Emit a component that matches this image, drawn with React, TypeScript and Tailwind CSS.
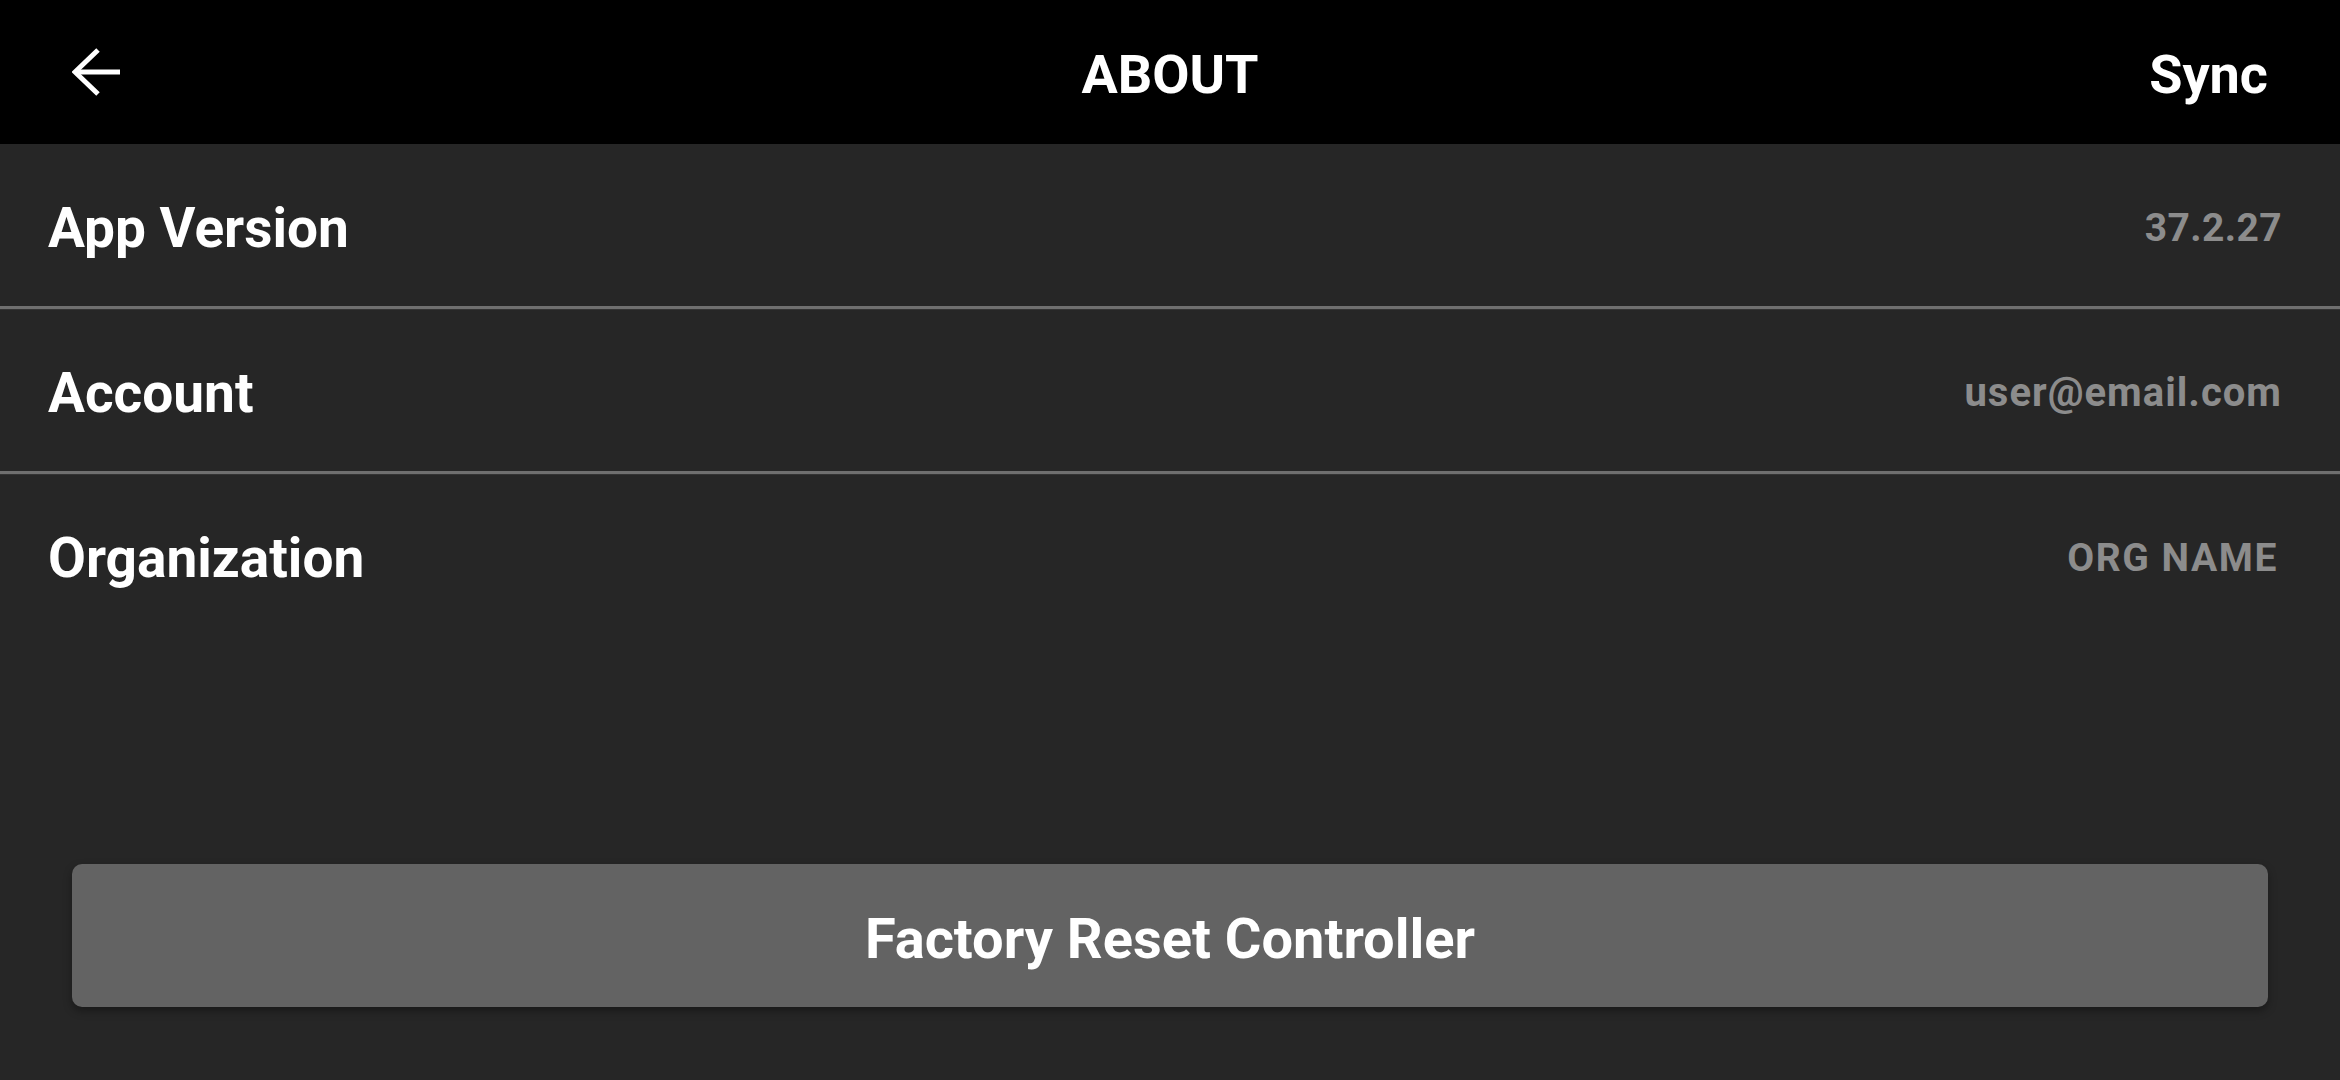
const rows = [
  { label: "App Version", value: "37.2.27", valueClass: "text-[39px] tracking-[0.01em]" },
  { label: "Account", value: "user@email.com", valueClass: "text-[40px] tracking-[0.025em]" },
  { label: "Organization", value: "ORG NAME", valueClass: "mr-[4px] text-[39px] tracking-[0.04em]" },
];

function BackArrow() {
  return (
    <svg width="48" height="48" viewBox="0 0 48 48" fill="none" stroke="white" strokeWidth="5">
      <path d="M3 24H48" />
      <path d="M26 2L3 24L26 46" />
    </svg>
  );
}

export default function App() {
  return (
    <div className="flex h-screen w-full flex-col bg-[#262626] font-['Roboto',sans-serif] text-white">
      {/* Top bar */}
      <header className="grid h-[144px] shrink-0 grid-cols-[1fr_auto_1fr] items-center bg-black px-[72px]">
        <button type="button" className="justify-self-start">
          <BackArrow />
        </button>
        <h1 className="pt-[5px] text-[54px] font-bold leading-none">ABOUT</h1>
        <button type="button" className="justify-self-end pt-[5px] text-[54px] font-bold leading-none">
          Sync
        </button>
      </header>

      {/* Info rows */}
      <div className="flex flex-col">
        {rows.map((row, i) => (
          <div key={row.label}>
            <div className="flex h-[162px] items-center justify-between pl-[48px] pr-[58px] pt-[6px]">
              <span className="text-[55px] font-bold leading-none">{row.label}</span>
              <span className={`font-bold leading-none text-[#8c8c8c] ${row.valueClass}`}>
                {row.value}
              </span>
            </div>
            {i < rows.length - 1 && (
              <div className="h-[3px] bg-[#6f6f6f] shadow-[0_1px_0_#333]" />
            )}
          </div>
        ))}
      </div>

      {/* Reset */}
      <div className="mt-auto px-[72px] pb-[73px]">
        <button
          type="button"
          className="flex h-[143px] w-full items-center justify-center rounded-[10px] bg-[#636363] pt-[6px] text-[56px] font-bold leading-none shadow-[0_4px_8px_rgba(0,0,0,0.35)]"
        >
          Factory Reset Controller
        </button>
      </div>
    </div>
  );
}
